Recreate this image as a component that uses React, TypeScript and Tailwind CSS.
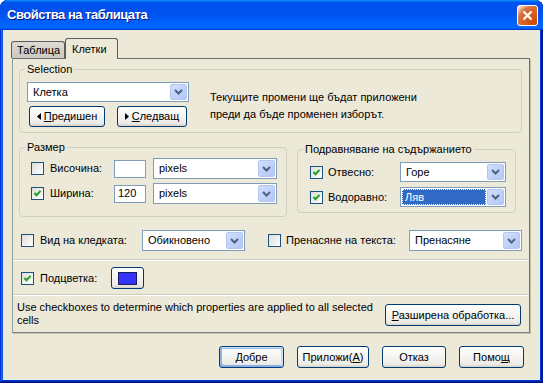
import React from 'react';

const Chevron = () => (
  <svg width="9" height="6" viewBox="0 0 9 6">
    <path d="M1 1 L4.5 4.5 L8 1" stroke="#4d6185" strokeWidth="2" fill="none" />
  </svg>
);

const Combo = ({ value, className, selected }: { value: string; className: string; selected?: boolean }) => (
  <div className={`flex items-stretch bg-white border border-[#7f9db9] p-[1px] shrink-0 ${className}`}>
    <div className="flex-1 flex items-center pr-[1px]">
      {selected ? (
        <span className="h-full w-full flex items-center pl-[3px] bg-[#316ac5] text-white outline outline-1 outline-dotted outline-[#fff] -outline-offset-1">
          {value}
        </span>
      ) : (
        <span className="pl-[4px]">{value}</span>
      )}
    </div>
    <div className="w-[17px] rounded-[2px] border border-[#b4c6f0] bg-[linear-gradient(135deg,#d3e0fc,#b0c6f5)] flex items-center justify-center">
      <Chevron />
    </div>
  </div>
);

const Check = ({ checked }: { checked?: boolean }) => (
  <span className="w-[13px] h-[13px] shrink-0 border border-[#1c5180] bg-[linear-gradient(135deg,#dcdcd7,#ffffff)] flex items-center justify-center">
    {checked && (
      <svg width="9" height="9" viewBox="0 0 9 9">
        <path d="M1.5 4 L3.5 6.2 L7.5 1.8" stroke="#21a121" strokeWidth="2" fill="none" />
      </svg>
    )}
  </span>
);

const Btn = ({ children, className, def }: { children: React.ReactNode; className: string; def?: boolean }) => (
  <button
    className={`flex items-center justify-center shrink-0 rounded-[3px] border border-[#003c74] bg-[linear-gradient(180deg,#ffffff,#ecebe6_86%,#d6d0c5)] text-black ${
      def
        ? 'shadow-[inset_-1px_1px_#cee7ff,inset_1px_2px_#98b8ea,inset_-2px_2px_#bcd4f6,inset_1px_-1px_#89ade4,inset_2px_-2px_#89ade4]'
        : ''
    } ${className}`}
  >
    {children}
  </button>
);

const Tri = ({ left }: { left?: boolean }) => (
  <svg width="4" height="7" viewBox="0 0 4 7" className="mr-[3px]">
    <path d={left ? 'M4 0 L0 3.5 L4 7Z' : 'M0 0 L4 3.5 L0 7Z'} fill="#000" />
  </svg>
);

export default function App() {
  return (
    <div className="w-[543px] h-[383px] bg-[#ece9d8] rounded-t-[8px] flex flex-col font-['Liberation_Sans',Arial,sans-serif] text-[11px] text-black shadow-[inset_-1px_-1px_#00138c,inset_1px_1px_#0831d9,inset_-2px_-2px_#001ea0,inset_2px_2px_#166aee,inset_-3px_-3px_#003bda,inset_3px_3px_#0855dd]">
      {/* title bar */}
      <div className="h-[30px] shrink-0 rounded-t-[8px] flex items-center justify-between pl-[7px] pr-[5px] bg-[linear-gradient(180deg,#0997ff,#0053ee_8%,#0050ee_40%,#0066ff_88%,#0066ff_93%,#005bff_95%,#003dd7_96%,#003dd7)]">
        <span className="text-white font-bold text-[13px] tracking-[-0.5px] [text-shadow:1px_1px_#0a1883]">Свойства на таблицата</span>
        <div className="w-[21px] h-[21px] rounded-[3px] border border-white bg-[radial-gradient(circle_at_90%_90%,#cc4600_0%,#dc6527_55%,#cd7546_70%,#ffccb2_90%,#ffffff_100%)] flex items-center justify-center">
          <svg width="11" height="11" viewBox="0 0 11 11">
            <path d="M1.5 1.5 L9.5 9.5 M9.5 1.5 L1.5 9.5" stroke="#fff" strokeWidth="2.2" />
          </svg>
        </div>
      </div>

      {/* body */}
      <div className="flex-1 mx-[3px] mb-[3px] pl-[9px] pr-[10px] pt-[8px]">
        {/* tabs */}
        <div className="flex items-end h-[20px] -ml-[1px]">
          <div className="h-[17px] w-[54px] border border-b-0 border-[#5c5c5c] rounded-t-[3px] bg-[linear-gradient(180deg,#dedbd4,#cbc8c0)] flex items-center pl-[5px]">
            Таблица
          </div>
          <div className="h-[21px] w-[53px] -mb-[1px] relative z-10 border border-b-0 border-[#5c5c5c] rounded-t-[3px] bg-[#ece9d8] flex items-center pl-[6px]">
            Клетки
          </div>
        </div>

        {/* panel */}
        <div className="h-[275px] border border-[#6f6f6f] border-l-[#919b9c] border-b-[#808080] shadow-[1px_1px_0_#c5c2b2] px-[6px]">
          <fieldset className="mt-[4px] w-[503px] border border-[#d0d0bf] rounded-[4px] pl-[7px] pr-[7px] pt-[6px] pb-[5px]">
            <legend className="-ml-[2px] px-[2px] leading-[13px]">Selection</legend>
            <div className="flex">
              <div className="flex flex-col gap-[4px]">
                <Combo value="Клетка" className="w-[162px] h-[20px]" />
                <div className="flex gap-[12px] ml-[2px]">
                  <Btn className="w-[76px] h-[21px]">
                    <Tri left />
                    <span><u>П</u>редишен</span>
                  </Btn>
                  <Btn className="w-[70px] h-[21px]">
                    <Tri />
                    <span><u>С</u>ледващ</span>
                  </Btn>
                </div>
              </div>
              <div className="ml-[21px] mt-[7px] leading-[17px]">
                Текущите промени ще бъдат приложени
                <br />
                преди да бъде променен изборът.
              </div>
            </div>
          </fieldset>

          <div className="flex items-start mt-[8px]">
            <fieldset className="w-[268px] border border-[#d0d0bf] rounded-[4px] pl-[11px] pt-[4px] pb-[12px]">
              <legend className="-ml-[6px] px-[2px] leading-[13px]">Размер</legend>
              <div className="flex flex-col gap-[4px]">
                <div className="flex items-center h-[21px]">
                  <Check />
                  <span className="ml-[6px] w-[64px]">Височина:</span>
                  <div className="w-[32px] h-[18px] bg-white border border-[#7f9db9]" />
                  <Combo value="pixels" className="ml-[7px] w-[124px] h-[21px]" />
                </div>
                <div className="flex items-center h-[21px]">
                  <Check checked />
                  <span className="ml-[6px] w-[64px]">Ширина:</span>
                  <div className="w-[32px] h-[18px] bg-white border border-[#7f9db9] flex items-center pl-[3px]">120</div>
                  <Combo value="pixels" className="ml-[7px] w-[124px] h-[21px]" />
                </div>
              </div>
            </fieldset>

            <fieldset className="ml-[10px] mt-[2px] w-[219px] border border-[#d0d0bf] rounded-[4px] pl-[12px] pt-[6px] pb-[5px]">
              <legend className="-ml-[7px] px-[2px] leading-[13px]">Подравняване на съдържанието</legend>
              <div className="flex flex-col gap-[5px]">
                <div className="flex items-center h-[20px]">
                  <Check checked />
                  <span className="ml-[5px] w-[72px]">Отвесно:</span>
                  <Combo value="Горе" className="w-[106px] h-[20px]" />
                </div>
                <div className="flex items-center h-[20px]">
                  <Check checked />
                  <span className="ml-[5px] w-[72px]">Водоравно:</span>
                  <Combo value="Ляв" selected className="w-[106px] h-[20px]" />
                </div>
              </div>
            </fieldset>
          </div>

          <div className="flex items-center h-[21px] mt-[13px] ml-[2px]">
            <Check />
            <span className="ml-[6px] w-[102px]">Вид на кледката:</span>
            <Combo value="Обикновено" className="w-[103px] h-[21px]" />
            <span className="ml-[23px]"><Check /></span>
            <span className="ml-[5px] w-[123px]">Пренасяне на текста:</span>
            <Combo value="Пренасяне" className="w-[113px] h-[21px]" />
          </div>

          <div className="-mx-[6px] mt-[8px] border-t border-t-[#d0ccbb] border-b border-b-white" />

          <div className="flex items-center h-[22px] mt-[6px] ml-[2px]">
            <Check checked />
            <span className="ml-[6px] w-[71px]">Подцветка:</span>
            <Btn className="w-[33px] h-[22px]">
              <span className="w-[19px] h-[13px] border border-[#1a1a5e] bg-[#3434ff]" />
            </Btn>
          </div>

          <div className="-mx-[6px] mt-[5px] border-t border-t-[#d0ccbb] border-b border-b-white" />

          <div className="flex items-start mt-[5px] -ml-[2px]">
            <div className="w-[360px] leading-[13px]">
              Use checkboxes to determine which properties are applied to all selected cells
            </div>
            <Btn className="ml-auto mr-[2px] mt-[3px] w-[136px] h-[22px]">
              <span><u>Р</u>азширена обработка...</span>
            </Btn>
          </div>
        </div>

        {/* dialog buttons */}
        <div className="flex gap-[13px] mt-[13px] ml-[207px]">
          <Btn def className="w-[65px] h-[22px]">Добре</Btn>
          <Btn className="w-[72px] h-[22px]">
            <span>Приложи(<u>А</u>)</span>
          </Btn>
          <Btn className="w-[64px] h-[22px]">Отказ</Btn>
          <Btn className="w-[65px] h-[22px]">
            <span>Помо<u>щ</u></span>
          </Btn>
        </div>
      </div>
    </div>
  );
}
